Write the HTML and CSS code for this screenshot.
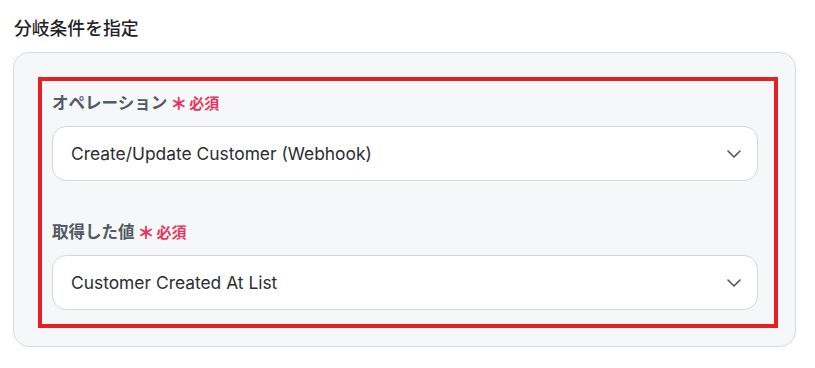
FILE: index.html
```html
<!DOCTYPE html>
<html lang="ja">
<head>
    <meta charset="UTF-8">
    <meta name="viewport" content="width=device-width, initial-scale=1.0">
    <title>分岐条件を指定</title>
    <link rel="stylesheet" href="styles.css">
</head>
<body>
    <h2 class="section-title">分岐条件を指定</h2>

    <div class="condition-card">
        <div class="highlight-box">
            <div class="field">
                <label class="field-label">オペレーション<span class="req-mark">＊</span><span class="req-text">必須</span></label>
                <div class="select-box">
                    <span class="select-value">Create/Update Customer (Webhook)</span>
                    <svg class="chevron" width="14" height="8" viewBox="0 0 14 8"><path d="M1 1l6 6 6-6" fill="none" stroke="#555" stroke-width="1.6" stroke-linecap="round" stroke-linejoin="round"/></svg>
                </div>
            </div>

            <div class="field field-second">
                <label class="field-label">取得した値<span class="req-mark">＊</span><span class="req-text">必須</span></label>
                <div class="select-box">
                    <span class="select-value">Customer Created At List</span>
                    <svg class="chevron" width="14" height="8" viewBox="0 0 14 8"><path d="M1 1l6 6 6-6" fill="none" stroke="#555" stroke-width="1.6" stroke-linecap="round" stroke-linejoin="round"/></svg>
                </div>
            </div>
        </div>
    </div>
</body>
</html>
```

FILE: styles.css
```css
body {
    margin: 0;
    padding: 14px 0 0 13px;
    background-color: white;
    font-family: Inter, "Noto Sans CJK JP", sans-serif;
}

.section-title {
    margin: 0 0 12px 1px;
    font-family: "Noto Sans CJK JP", sans-serif;
    font-size: 17.8px;
    line-height: 26px;
    font-weight: 500;
    color: #1f2328;
}

.condition-card {
    width: 783px;
    height: 295px;
    box-sizing: border-box;
    background-color: #f6f7f9;
    border: 1px solid #d5d8dd;
    border-radius: 16px;
    padding: 24px 17px 18px 24px;
}

.highlight-box {
    border: 4px solid #e61e25;
    padding: 10px 16px 14px 10px;
}

.field-label {
    display: flex;
    align-items: center;
    height: 22px;
    margin-bottom: 13px;
    font-family: "Noto Sans CJK JP", sans-serif;
    font-size: 16.5px;
    font-weight: 700;
    color: #515a66;
}

.req-mark {
    margin-left: 3px;
    font-size: 17px;
    font-weight: 900;
    color: #e8345a;
}

.req-text {
    margin-left: 2px;
    font-size: 15px;
    font-weight: 700;
    color: #e8345a;
}

.field-second {
    margin-top: 39px;
}

.select-box {
    display: flex;
    align-items: center;
    justify-content: space-between;
    height: 55px;
    box-sizing: border-box;
    background-color: white;
    border: 1px solid #d3d6db;
    border-radius: 14px;
    padding: 0 16px 0 18px;
}

.select-value {
    font-size: 17.4px;
    color: #2b2d31;
}
```
